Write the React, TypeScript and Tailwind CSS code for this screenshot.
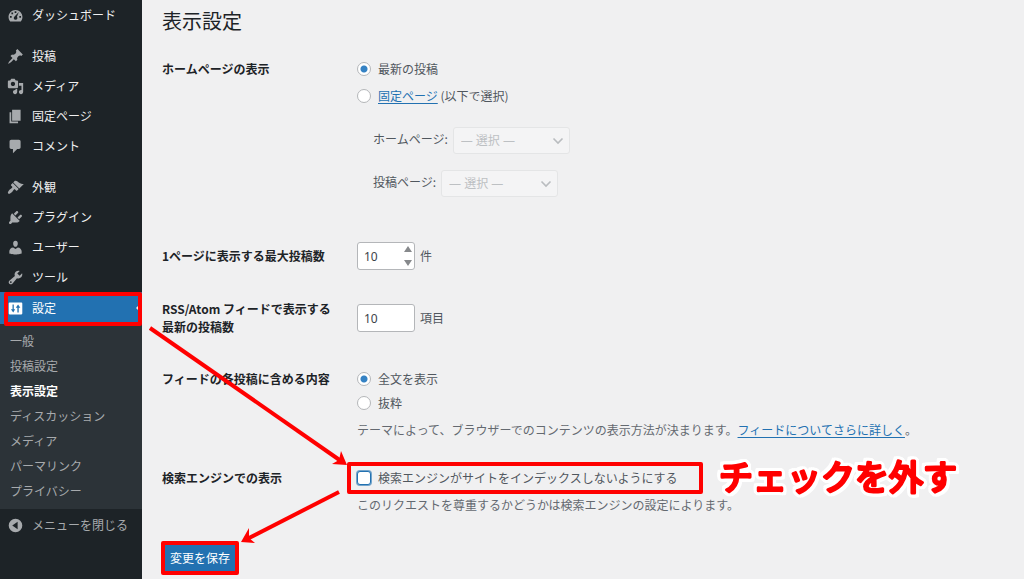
import type { ReactNode } from "react";

const icons = {
  post: "M10.44 3.02l1.82-1.82 6.36 6.35-1.83 1.82c-1.05-.68-2.48-.57-3.41.36l-.75.75c-.92.93-1.04 2.35-.35 3.41l-1.83 1.82-2.41-2.41-2.8 2.79c-.42.42-3.38 2.71-3.8 2.29s1.86-3.39 2.28-3.81l2.79-2.79L4.1 9.36l1.83-1.82c1.05.69 2.48.57 3.4-.36l.75-.75c.93-.92 1.05-2.35.36-3.41z",
  media:
    "M13 11V4c0-.55-.45-1-1-1h-1.67L9 1H5L3.67 3H2c-.55 0-1 .45-1 1v7c0 .55.45 1 1 1h10c.55 0 1-.45 1-1zM7 4.5c1.38 0 2.5 1.12 2.5 2.5S8.38 9.5 7 9.5 4.5 8.38 4.5 7 5.62 4.5 7 4.5zM14 6h5v10.5c0 1.38-1.12 2.5-2.5 2.5S14 17.88 14 16.5s1.12-2.5 2.5-2.5c.17 0 .34.02.5.05V9h-3V6zm-4 8.05V13h2v3.5c0 1.38-1.12 2.5-2.5 2.5S7 17.88 7 16.5 8.12 14 9.5 14c.17 0 .34.02.5.05z",
  page: "M6 15V2h10v13H6zm-1 1h8v2H3V5h2v11z",
  comment:
    "M5 2h9c1.1 0 2 .9 2 2v7c0 1.1-.9 2-2 2h-2l-5 5v-5H5c-1.1 0-2-.9-2-2V4c0-1.1.9-2 2-2z",
  appearance:
    "M14.48 11.06L7.41 3.99l1.5-1.5c.5-.56 2.3-.47 3.51.32 1.21.8 1.43 1.28 2.91 2.1 1.18.64 2.45 1.26 4.45.85zm-.71.71L6.7 4.7 4.93 6.47c-.39.39-.39 1.02 0 1.41l1.06 1.06c.39.39.39 1.03 0 1.42-.6.6-1.43 1.11-2.21 1.69-.35.26-.7.53-1.01.84C1.43 14.23.4 16.08 1.4 17.07c.99 1 2.84-.03 4.18-1.36.31-.31.58-.66.85-1.02.57-.78 1.08-1.61 1.69-2.21.39-.39 1.02-.39 1.41 0l1.06 1.06c.39.39 1.02.39 1.41 0z",
  plugin:
    "M13.11 4.36L9.87 7.6 8 5.73l3.24-3.24c.35-.34 1.05-.2 1.56.32.52.51.66 1.21.31 1.55zm-8 1.77l.91-1.12 9.01 9.01-1.19.84c-.71.71-2.63 1.16-3.82 1.16H6.14L4.9 17.26c-.59.59-1.54.59-2.12 0-.59-.58-.59-1.53 0-2.12l1.24-1.24v-3.88c0-1.13.4-3.19 1.09-3.89zm7.26 3.97l3.24-3.24c.34-.35 1.04-.21 1.55.31.52.51.66 1.21.31 1.55l-3.24 3.25z",
  user: "M10 9.25c-2.27 0-2.73-3.44-2.73-3.44C7 4.02 7.82 2 9.97 2c2.16 0 2.98 2.02 2.71 3.81 0 0-.41 3.44-2.68 3.44zm0 2.57L12.72 10c2.39 0 4.52 2.33 4.52 4.53v2.49s-3.65 1.13-7.24 1.13c-3.65 0-7.24-1.13-7.24-1.13v-2.49c0-2.25 1.94-4.48 4.47-4.48z",
  tool: "M16.68 9.77c-1.34 1.34-3.3 1.67-4.95.99l-5.41 6.52c-.99.99-2.59.99-3.58 0s-.99-2.59 0-3.57l6.52-5.42c-.68-1.65-.35-3.61.99-4.95 1.28-1.28 3.12-1.62 4.72-1.06l-2.89 2.89 2.82 2.82 2.86-2.87c.53 1.58.18 3.39-1.08 4.65zM3.81 16.21c.4.39 1.04.39 1.43 0 .4-.4.4-1.04 0-1.43-.39-.4-1.03-.4-1.43 0-.39.39-.39 1.03 0 1.43z",
  settings:
    "M18 16V4c0-.55-.45-1-1-1H3c-.55 0-1 .45-1 1v12c0 .55.45 1 1 1h14c.55 0 1-.45 1-1zM8 11h1.600L7.300 14.800 4.600 11H6.500V5.200H8V11zM12.200 9H10.300L13 5.200 15.700 9H13.800V14.800H12.200V9z",
  dashboard:
    "M3.76 17h12.48c1.1-1.4 1.96-3.13 1.96-5.2 0-4.5-3.68-8.300-8.200-8.300s-8.200 3.800-8.200 8.300c0 2.070.86 3.800 1.960 5.200zM9 5h2v2H9zM5.200 6.600h2v2h-2zM3.500 10.500h2v2h-2zM14.500 10.500h2v2h-2zM13.900 5.900l-2.200 5.600c1.100 1.300.5 3.500-1.700 3.500-2 0-2.700-2.300-1.400-3.500z",
  collapse:
    "M10 2a8 8 0 1 0 0 16 8 8 0 0 0 0-16zM12.500 5.700v8.600L6.200 10z",
};

type IconName = keyof typeof icons;

function Icon({ name }: { name: IconName }) {
  return (
    <svg viewBox="0 0 20 20" className="size-[17px] shrink-0" fill="currentColor" fillRule="evenodd" aria-hidden="true">
      <path d={icons[name]} />
    </svg>
  );
}

const groups: { name: IconName; label: string }[][] = [
  [{ name: "dashboard", label: "ダッシュボード" }],
  [
    { name: "post", label: "投稿" },
    { name: "media", label: "メディア" },
    { name: "page", label: "固定ページ" },
    { name: "comment", label: "コメント" },
  ],
  [
    { name: "appearance", label: "外観" },
    { name: "plugin", label: "プラグイン" },
    { name: "user", label: "ユーザー" },
    { name: "tool", label: "ツール" },
  ],
];

const submenu = ["一般", "投稿設定", "表示設定", "ディスカッション", "メディア", "パーマリンク", "プライバシー"];

function Sidebar() {
  return (
    <nav className="w-[142px] shrink-0 bg-[#1d2327] text-[#f0f0f1]">
      <div className="flex flex-col gap-[11px]">
        {groups.map((group, i) => (
          <ul key={i}>
            {group.map((item) => (
              <li key={item.label}>
                <a href="#" className="flex h-[30px] items-center gap-2 px-[7px]">
                  <span className="text-[#a7aaad]">
                    <Icon name={item.name} />
                  </span>
                  {item.label}
                </a>
              </li>
            ))}
          </ul>
        ))}
      </div>
      <a href="#" className="relative flex h-8 items-center gap-2 bg-[#2271b1] px-[7px] text-white">
        <Icon name="settings" />
        設定
        <svg viewBox="0 0 6 12" className="absolute top-[10px] right-0 h-3 w-[6px]" fill="#f0f0f1" aria-hidden="true">
          <path d="M6 0v12L0 6z" />
        </svg>
        <Highlight className="-bottom-[2px] left-1 right-0 top-0" />
      </a>
      <ul className="bg-[#2c3338] pt-1 pb-[6px] text-[#a7aaad]">
        {submenu.map((label) => (
          <li key={label}>
            <a
              href="#"
              className={
                label === "表示設定"
                  ? "flex h-[25px] items-center px-[10px] font-bold text-white"
                  : "flex h-[25px] items-center px-[10px]"
              }
            >
              {label}
            </a>
          </li>
        ))}
      </ul>
      <button type="button" className="flex h-8 items-center gap-2 px-[7px] text-[#a7aaad]">
        <Icon name="collapse" />
        メニューを閉じる
      </button>
    </nav>
  );
}

function Highlight({ className }: { className: string }) {
  return <span aria-hidden="true" className={`pointer-events-none absolute rounded-[2px] border-4 border-[#ff0000] ${className}`} />;
}

function Row({ label, children, className }: { label: ReactNode; children: ReactNode; className?: string }) {
  return (
    <div className={`grid grid-cols-[195px_1fr] ${className ?? ""}`}>
      <div className="pr-4 font-bold text-[#1d2327]">{label}</div>
      <div>{children}</div>
    </div>
  );
}

function Radio({ name, id, checked }: { name: string; id: string; checked?: boolean }) {
  return (
    <input
      type="radio"
      name={name}
      id={id}
      defaultChecked={checked}
      className="size-[14px] shrink-0 appearance-none rounded-full border border-[#b4b6b9] bg-white checked:bg-[radial-gradient(circle,#3582c4_0_3px,white_4px)]"
    />
  );
}

function PageSelect({ id, label }: { id: string; label: string }) {
  return (
    <div className="flex h-[27px] items-start gap-[5px] pl-4">
      <label htmlFor={id} className="leading-6">
        {label}
      </label>
      <div className="relative">
        <select
          id={id}
          disabled
          className="h-[27px] w-[117px] appearance-none rounded-[3px] border border-[#e4e5e6] bg-[#f4f4f5] px-[7px] font-['Noto_Sans','Noto_Sans_CJK_JP',sans-serif] text-[#bdc0c3] opacity-100"
        >
          <option>— 選択 —</option>
        </select>
        <svg viewBox="0 0 12 8" className="absolute top-[10px] right-[6px] h-2 w-3" fill="none" stroke="#b9bcbf" strokeWidth="1.600" aria-hidden="true">
          <path d="M1.500 1.500L6 6l4.500-4.500" />
        </svg>
      </div>
    </div>
  );
}

const inputStyle =
  "h-7 w-[58px] rounded-[3px] border border-[#b4b6b9] bg-white px-[6px] font-['Noto_Sans',sans-serif] text-[#3c434a] [appearance:textfield] [&::-webkit-inner-spin-button]:appearance-none";

function Annotations() {
  return (
    <svg className="pointer-events-none absolute top-0 left-0 h-[579px] w-[1024px]" viewBox="0 0 1024 579">
      <g fill="#ff0000" stroke="#ff0000">
        <path d="M150 328L341 461" strokeWidth="4" fill="none" />
        <path d="M347 465L332 464L339 460L341 451Z" stroke="none" />
        <path d="M339 492L247 539" strokeWidth="4" fill="none" />
        <path d="M241 542L249 528L249 538L255 543Z" stroke="none" />
      </g>
      <text
        x="719"
        y="490"
        fontSize="34"
        fill="#ff0000"
        stroke="#ff0000"
        strokeWidth="3"
        strokeLinejoin="round"
        strokeLinecap="round"
        className="[filter:drop-shadow(2px_0_0_white)_drop-shadow(-2px_0_0_white)_drop-shadow(0_2px_0_white)_drop-shadow(0_-2px_0_white)_drop-shadow(1px_1px_0_white)_drop-shadow(-1px_-1px_0_white)]"
      >
        チェックを外す
      </text>
    </svg>
  );
}

export default function App() {
  return (
    <div
      lang="ja"
      className="relative flex min-h-screen overflow-hidden bg-[#f0f0f1] font-['Noto_Sans_CJK_JP',sans-serif] text-[12px] leading-[18px] text-[#50575e]"
    >
      <Sidebar />
      <main className="min-w-0 flex-1 px-5 pt-[7px]">
        <h1 className="text-[20px] leading-7 text-[#1d2327]">表示設定</h1>
        <form className="mt-[25px]">
          <Row label="ホームページの表示">
            <div className="flex items-center gap-[7px]">
              <Radio name="front" id="front-posts" checked />
              <label htmlFor="front-posts">最新の投稿</label>
            </div>
            <div className="mt-[9px] flex items-center gap-[7px]">
              <Radio name="front" id="front-page" />
              <label htmlFor="front-page">
                <a href="#" className="text-[#2271b1] underline underline-offset-2">固定ページ</a> (以下で選択)
              </label>
            </div>
            <div className="mt-[22px] flex flex-col gap-4">
              <PageSelect id="home" label="ホームページ:" />
              <PageSelect id="posts" label="投稿ページ:" />
            </div>
          </Row>
          <Row className="mt-[45px] items-center" label={<label htmlFor="per-page">1ページに表示する最大投稿数</label>}>
            <div className="flex items-center gap-[5px]">
              <div className="relative flex">
                <input id="per-page" type="number" defaultValue={10} className={inputStyle} />
                <svg viewBox="0 0 8 20" className="absolute top-1 right-[3px] h-5 w-2" fill="#87898c" aria-hidden="true">
                  <path d="M4 0l4 6H0zM4 20l4-6H0z" />
                </svg>
              </div>
              件
            </div>
          </Row>
          <Row
            className="mt-[30px] items-center"
            label={
              <label htmlFor="rss">
                RSS/Atom フィードで表示する
                <br />
                最新の投稿数
              </label>
            }
          >
            <div className="flex items-center gap-[5px]">
              <input id="rss" type="number" defaultValue={10} className={inputStyle} />
              項目
            </div>
          </Row>
          <Row className="mt-[34px]" label="フィードの各投稿に含める内容">
            <div className="flex items-center gap-[7px]">
              <Radio name="feed" id="feed-full" checked />
              <label htmlFor="feed-full">全文を表示</label>
            </div>
            <div className="mt-[6px] flex items-center gap-[7px]">
              <Radio name="feed" id="feed-excerpt" />
              <label htmlFor="feed-excerpt">抜粋</label>
            </div>
            <p className="mt-[9px] text-[#646970]">
              テーマによって、ブラウザーでのコンテンツの表示方法が決まります。
              <a href="#" className="text-[#2271b1] underline underline-offset-2">フィードについてさらに詳しく</a>。
            </p>
          </Row>
          <Row className="mt-[30px]" label="検索エンジンでの表示">
            <div className="relative flex w-[336px] items-center gap-[7px]">
              <input
                type="checkbox"
                id="noindex"
                className="size-[14px] shrink-0 appearance-none rounded-[3px] border border-[#2271b1] bg-white ring-1 ring-[#2271b1]/60"
              />
              <label htmlFor="noindex">検索エンジンがサイトをインデックスしないようにする</label>
              <Highlight className="-inset-y-[7px] -right-[10px] -left-[10px]" />
            </div>
            <p className="mt-[9px] text-[#646970]">このリクエストを尊重するかどうかは検索エンジンの設定によります。</p>
          </Row>
          <div className="relative mt-7 w-[76px]">
            <button type="submit" className="block h-8 w-full bg-[#2271b1] text-white">
              変更を保存
            </button>
            <Highlight className="-inset-[1px]" />
          </div>
        </form>
      </main>
      <Annotations />
    </div>
  );
}
